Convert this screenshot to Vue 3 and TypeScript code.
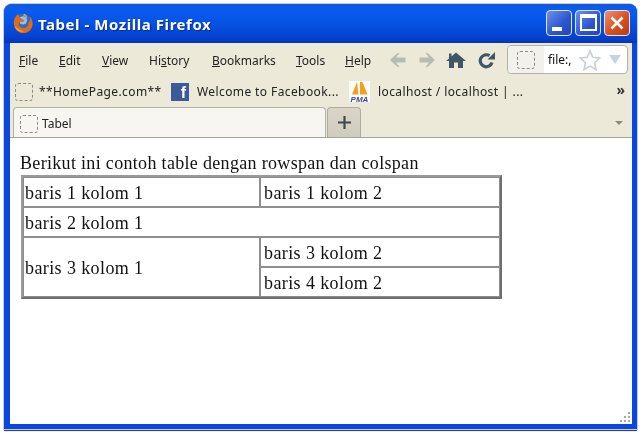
<script setup lang="ts">
const menus = [
  { pre: '', key: 'F', post: 'ile', w: 40 },
  { pre: '', key: 'E', post: 'dit', w: 43 },
  { pre: '', key: 'V', post: 'iew', w: 47 },
  { pre: 'Hi', key: 's', post: 'tory', w: 63 },
  { pre: '', key: 'B', post: 'ookmarks', w: 84 },
  { pre: '', key: 'T', post: 'ools', w: 49 },
  { pre: '', key: 'H', post: 'elp', w: 37 },
]
</script>

<template>
  <div class="stage">
    <div class="window">
      <header class="titlebar">
        <svg class="fx" viewBox="0 0 24 24" width="22" height="22">
          <circle cx="12" cy="12" r="10" fill="#2b6cc4" />
          <circle cx="12" cy="9" r="4.5" fill="#8fc0ec" />
          <path d="M7 2 C3 5 1.500 9 2 13 C2.600 19 7 23 12.500 23 C18 23 22.500 18.500 22.500 13 C22.500 9 21 6.500 19.500 5 C20 8 19.500 10 18 11.500 C18.500 15 15.500 18 12 17.500 C8.500 17 7 14.500 7.500 12 C8 10.500 10 10.500 12 10.500 C14 10 13 8 11 7.500 C9 7 7 5 7 2 Z" fill="#e06a18" />
          <path d="M13 2 C16 3 17 5 16.500 7.500 C15.500 5.500 14 4 12 3.800 Z" fill="#f0a030" />
          <path d="M3 15 C4.500 20 9 22 13 21.500 C9.500 20.500 6 18.500 3 15 Z" fill="#f2b03c" />
        </svg>
        <span class="title">Tabel - Mozilla Firefox</span>
        <div class="winbtns">
          <button class="winbtn blue">
            <span class="minbar"></span>
          </button>
          <button class="winbtn blue">
            <span class="maxbox"></span>
          </button>
          <button class="winbtn red">
            <svg viewBox="0 0 16 16" width="16" height="16">
              <path d="M2.500 2.500 L13.500 13.500 M13.500 2.500 L2.500 13.500" stroke="#fff" stroke-width="2.600" fill="none" />
            </svg>
          </button>
        </div>
      </header>

      <div class="chrome">
        <div class="menurow">
          <nav class="menu">
            <span v-for="m in menus" :key="m.key" class="menuitem" :style="{ width: m.w + 'px' }">{{ m.pre }}<u>{{ m.key }}</u>{{ m.post }}</span>
          </nav>
          <svg class="navicon first" viewBox="0 0 18 16" width="18" height="16">
            <path d="M8.500 1 L1 8 L8.500 15 L10.500 15 L7 10.500 H16.500 V5.500 H7 L10.500 1 Z" fill="#b7bbb2" />
          </svg>
          <svg class="navicon second" viewBox="0 0 18 16" width="18" height="16">
            <path d="M9.500 1 L17 8 L9.500 15 L7.500 15 L11 10.500 H1.500 V5.500 H11 L7.500 1 Z" fill="#b7bbb2" />
          </svg>
          <svg class="navicon third" viewBox="0 0 20 16" width="20" height="16">
            <path d="M10 0.500 L20 9 H17 V16 H12 V10.500 H8 V16 H3 V9 H0 L3 6.500 V1.500 H5.500 V4.400 Z" fill="#3f5666" />
          </svg>
          <svg class="navicon fourth" viewBox="0 0 18 18" width="18" height="18">
            <path d="M14 11.500 A6 6 0 1 1 11.500 4.700" stroke="#3f5666" stroke-width="3.200" fill="none" />
            <path d="M9.500 8.500 L17 8.500 L17 1 Z" fill="#3f5666" />
          </svg>
          <div class="urlbar">
            <span class="urlicon"><span class="dashed"></span></span>
            <span class="urltext">file:,</span>
            <svg class="star" viewBox="0 0 24 24" width="22" height="22">
              <path d="M12 2 L15 9 L22.500 9.800 L17 15 L18.500 22.500 L12 18.700 L5.500 22.500 L7 15 L1.500 9.800 L9 9 Z" fill="#fff" stroke="#c9cfd2" stroke-width="1.800" />
            </svg>
            <span class="urlarrow"></span>
          </div>
        </div>

        <div class="bookmarks">
          <span class="dashed bm"></span>
          <span class="bmtext home">**HomePage.com**</span>
          <span class="fb">f</span>
          <span class="bmtext face">Welcome to Facebook...</span>
          <svg class="pma" viewBox="0 0 21 21" width="21" height="21">
            <rect width="21" height="21" fill="#fbfbf8" />
            <path d="M3 13.500 L8 1 L9.500 13.500 Z" fill="#f3a11c" />
            <path d="M11 13.500 L11 1 L13.500 1 L18.500 13.500 Z" fill="#f3a11c" />
            <text x="10.500" y="20.500" text-anchor="middle" class="pmatext">PMA</text>
          </svg>
          <span class="bmtext local">localhost / localhost | ...</span>
          <span class="chev">»</span>
        </div>

        <div class="tabs">
          <div class="tab">
            <span class="dashed"></span>
            <span class="tablabel">Tabel</span>
          </div>
          <div class="newtab">
            <svg viewBox="0 0 13 13" width="13" height="13">
              <path d="M6.500 0 V13 M0 6.500 H13" stroke="#3d4a52" stroke-width="2.200" />
            </svg>
          </div>
          <span class="tabarrow"></span>
        </div>
      </div>

      <main class="page">
        <p class="intro">Berikut ini contoh table dengan rowspan dan colspan</p>
        <table class="data" border="2">
          <tbody>
            <tr>
              <td class="c1">baris 1 kolom 1</td>
              <td class="c2">baris 1 kolom 2</td>
            </tr>
            <tr>
              <td colspan="2">baris 2 kolom 1</td>
            </tr>
            <tr>
              <td rowspan="2">baris 3 kolom 1</td>
              <td class="c2">baris 3 kolom 2</td>
            </tr>
            <tr>
              <td class="c2">baris 4 kolom 2</td>
            </tr>
          </tbody>
        </table>
        <svg class="grip" viewBox="0 0 12 12" width="12" height="12">
          <g fill="#a9a99c">
            <rect x="9" y="1" width="2" height="2" />
            <rect x="5" y="5" width="2" height="2" />
            <rect x="9" y="5" width="2" height="2" />
            <rect x="1" y="9" width="2" height="2" />
            <rect x="5" y="9" width="2" height="2" />
            <rect x="9" y="9" width="2" height="2" />
          </g>
        </svg>
      </main>
    </div>
  </div>
</template>

<style>
html, body { margin: 0; background: #fff; }
</style>

<style scoped>
.stage {
  width: 644px;
  height: 434px;
  box-sizing: border-box;
  padding: 4px 7px 5px 4px;
  background: #fff;
  overflow: hidden;
  filter: blur(0.35px);
}
.window {
  height: 425px;
  display: flex;
  flex-direction: column;
  background: #0a46e0;
  border-radius: 8px 8px 0 0;
  box-shadow: 0 0 0 1px #c5cbe0, 0 2px 1px #20304a;
  padding: 0 5px 5px 6px;
  box-sizing: border-box;
}
.titlebar {
  height: 39px;
  margin: 0 -5px 0 -6px;
  padding: 0 7px 0 8px;
  display: flex;
  align-items: center;
  flex: none;
  border-radius: 8px 8px 0 0;
  background: linear-gradient(#1257d8 0, #0a5cf0 12%, #0654e6 45%, #0442cf 85%, #0336b8 100%);
}
.fx { flex: none; margin-top: -2px; }
.title {
  margin-left: 4px;
  color: #fff;
  font: bold 15px "Noto Sans", sans-serif;
  text-shadow: 1px 1px 1px #0a2a90;
  letter-spacing: 0.55px;
}
.winbtns { margin-left: auto; display: flex; gap: 3px; margin-top: -1px; }
.winbtn {
  width: 26px;
  height: 26px;
  padding: 0;
  border: 1px solid #dfe6f6;
  border-radius: 4px;
  display: flex;
  align-items: center;
  justify-content: center;
  position: relative;
}
.blue { background: linear-gradient(135deg, #6d92ea, #2a54cf 60%, #2448bb); }
.red { background: linear-gradient(135deg, #ec9272, #d9501f 55%, #bc3a10); }
.minbar { width: 10px; height: 4px; background: #fff; align-self: flex-end; margin: 0 4px 4px 0; }
.maxbox { width: 13px; height: 11px; border: 2px solid #fff; border-top-width: 4px; box-sizing: content-box; margin-top: -1px; }

.chrome {
  flex: none;
  background: #ece9d8;
  height: 95px;
  display: flex;
  flex-direction: column;
  font-family: "Noto Sans", sans-serif;
  color: #222;
}
.menurow { height: 34px; display: flex; align-items: center; padding-left: 9px; flex: none; }
.menu { display: flex; font-size: 12px; width: 371px; }
.menuitem { flex: none; white-space: nowrap; }
.navicon { flex: none; }
.first { margin-left: -1px; }
.second { margin-left: 11px; }
.third { margin-left: 10px; }
.fourth { margin-left: 12px; }
.urlbar {
  margin-left: 11px;
  width: 121px;
  height: 29px;
  box-sizing: border-box;
  border: 1px solid #b4b2a6;
  border-radius: 4px;
  background: #fff;
  display: flex;
  align-items: center;
  flex: none;
  margin-top: -1px;
}
.urlicon {
  width: 36px;
  height: 100%;
  background: #f2f1ec;
  display: flex;
  align-items: center;
  justify-content: center;
  flex: none;
  border-radius: 4px 0 0 4px;
}
.dashed {
  display: block;
  flex: none;
  width: 16px;
  height: 16px;
  border: 1px dashed #8a8a86;
  border-radius: 3px;
}
.urltext { margin-left: 4px; font-size: 12px; color: #111; width: 27px; flex: none; }
.star { flex: none; margin-left: 4px; }
.urlarrow {
  margin-left: 8px;
  width: 0;
  height: 0;
  border-left: 6px solid transparent;
  border-right: 6px solid transparent;
  border-top: 9px solid #c8d2da;
}

.bookmarks { height: 28px; padding-top: 1px; box-sizing: border-box; display: flex; align-items: center; padding-left: 5px; font-size: 12px; flex: none; position: relative; }
.bm { border-color: #8a8a80; }
.bmtext { white-space: nowrap; flex: none; letter-spacing: 0.4px; }
.home { margin-left: 6px; width: 132px; }
.fb {
  width: 18px;
  height: 18px;
  flex: none;
  background: #3b5a9a;
  color: #fff;
  font: bold 16px/20px "Liberation Sans", sans-serif;
  text-align: right;
  padding-right: 3px;
  box-sizing: border-box;
  overflow: hidden;
}
.face { margin-left: 8px; width: 152px; }
.pma { flex: none; }
.pmatext { font: italic bold 8px "Liberation Sans", sans-serif; fill: #3c4a94; }
.local { margin-left: 8px; }
.chev { margin-left: auto; margin-right: 7px; font-size: 14px; font-weight: bold; color: #333; line-height: 1; margin-top: -3px; }

.tabs { flex: 1; display: flex; align-items: flex-end; padding-left: 3px; border-bottom: 1px solid #a5a498; position: relative; }
.tab {
  width: 313px;
  height: 30px;
  box-sizing: border-box;
  border: 1px solid #b5b3a6;
  border-bottom: none;
  border-radius: 4px 4px 0 0;
  background: #f7f6f1;
  display: flex;
  align-items: center;
  padding: 2px 0 0 6px;
  flex: none;
}
.tablabel { margin-left: 4px; font-size: 12px; color: #222; }
.newtab {
  width: 34px;
  height: 30px;
  margin-left: 1px;
  box-sizing: border-box;
  border: 1px solid #aeac9e;
  border-bottom: none;
  border-radius: 4px 4px 0 0;
  background: linear-gradient(#d9d6c8, #cfccbd);
  display: flex;
  align-items: center;
  justify-content: center;
  flex: none;
}
.tabarrow {
  margin-left: auto;
  margin-right: 9px;
  margin-bottom: 12px;
  width: 0;
  height: 0;
  border-left: 4px solid transparent;
  border-right: 4px solid transparent;
  border-top: 4px solid #8b8b84;
}

.page {
  flex: 1;
  min-height: 0;
  background: #fff;
  position: relative;
  padding: 15px 0 0 10px;
  font-family: "Liberation Serif", serif;
  font-size: 18px;
  color: #111;
}
.intro { margin: 0; line-height: 21px; letter-spacing: 0.32px; }
.data {
  width: 481px;
  margin-top: 1px;
  margin-left: 1px;
  box-sizing: border-box;
  border-collapse: separate;
  border-spacing: 0;
  border: 2px solid;
  border-color: #9a9a9a #6e6e6e #6e6e6e #9a9a9a;
  font-size: 18px;
  letter-spacing: 0.4px;
}
.data td {
  border: 1px solid #8e8e8e;
  height: 30px;
  padding: 1px 1px 0 1px;
  line-height: 20px;
  box-sizing: border-box;
}
.data td.c2 { padding-left: 3px; }
.c1 { width: 237px; }
.grip { position: absolute; right: 1px; bottom: 1px; }
</style>
